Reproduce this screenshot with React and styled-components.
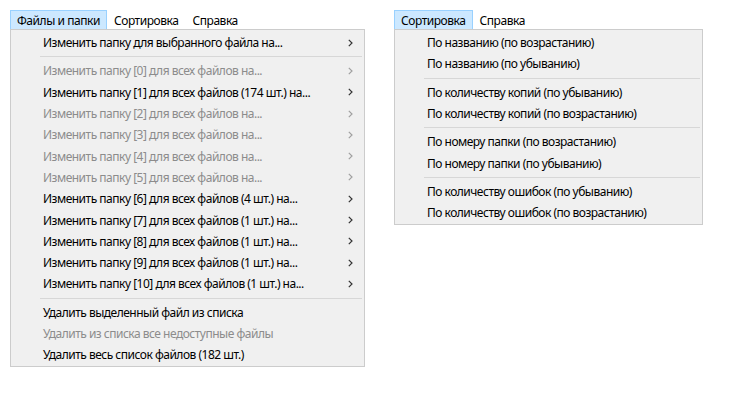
import React from "react";
import styled, { createGlobalStyle } from "styled-components";

const GlobalStyle = createGlobalStyle`
  html, body {
    margin: 0;
    padding: 0;
    background: #ffffff;
  }
  body {
    font-family: "Noto Sans", "Open Sans", "Liberation Sans", sans-serif;
    font-size: 12px;
    color: #000;
  }
`;

const Page = styled.div`
  display: flex;
  align-items: flex-start;
  gap: 29px;
  padding: 10px;
`;

const MenuGroup = styled.div`
  display: flex;
  flex-direction: column;
`;

const MenuBar = styled.div`
  display: flex;
  height: 19px;
`;

const MenuTitle = styled.div`
  box-sizing: border-box;
  height: 19px;
  padding: 0 6px;
  display: flex;
  align-items: center;
  border: 1px solid ${(p) => (p.$active ? "#99d1ff" : "transparent")};
  border-bottom: none;
  background: ${(p) => (p.$active ? "#cce8ff" : "transparent")};
  white-space: nowrap;
  letter-spacing: -0.45px;
`;

const Dropdown = styled.div`
  box-sizing: border-box;
  width: ${(p) => p.$width}px;
  background: #f0f0f0;
  border: 1px solid #cccccc;
  padding: 2px 2px 1px;
  display: flex;
  flex-direction: column;
`;

const Item = styled.div`
  height: 21.3px;
  display: flex;
  align-items: center;
  padding-left: 30px;
  padding-right: 9px;
  color: ${(p) => (p.$disabled ? "#8c8c8c" : "#000000")};
  white-space: nowrap;
  letter-spacing: -0.5px;
`;

const Label = styled.span`
  flex: 1;
`;

const Separator = styled.div`
  height: 1px;
  background: #d7d7d7;
  margin: 3px 0 3px 27px;
`;

const ChevronIcon = ({ disabled }) => (
  <svg width="5" height="8" viewBox="0 0 5 8" style={{ display: "block" }}>
    <polyline
      points="0.8,0.8 4,4 0.8,7.2"
      fill="none"
      stroke={disabled ? "#a0a0a0" : "#333333"}
      strokeWidth="1.2"
    />
  </svg>
);

const leftItems = [
  { label: "Изменить папку для выбранного файла на...", sub: true },
  { sep: true },
  { label: "Изменить папку [0] для всех файлов на...", sub: true, disabled: true },
  { label: "Изменить папку [1] для всех файлов (174 шт.) на...", sub: true },
  { label: "Изменить папку [2] для всех файлов на...", sub: true, disabled: true },
  { label: "Изменить папку [3] для всех файлов на...", sub: true, disabled: true },
  { label: "Изменить папку [4] для всех файлов на...", sub: true, disabled: true },
  { label: "Изменить папку [5] для всех файлов на...", sub: true, disabled: true },
  { label: "Изменить папку [6] для всех файлов (4 шт.) на...", sub: true },
  { label: "Изменить папку [7] для всех файлов (1 шт.) на...", sub: true },
  { label: "Изменить папку [8] для всех файлов (1 шт.) на...", sub: true },
  { label: "Изменить папку [9] для всех файлов (1 шт.) на...", sub: true },
  { label: "Изменить папку [10] для всех файлов (1 шт.) на...", sub: true },
  { sep: true },
  { label: "Удалить выделенный файл из списка" },
  { label: "Удалить из списка все недоступные файлы", disabled: true },
  { label: "Удалить весь список файлов (182 шт.)" },
];

const rightItems = [
  { label: "По названию (по возрастанию)" },
  { label: "По названию (по убыванию)" },
  { sep: true },
  { label: "По количеству копий (по убыванию)" },
  { label: "По количеству копий (по возрастанию)" },
  { sep: true },
  { label: "По номеру папки (по возрастанию)" },
  { label: "По номеру папки (по убыванию)" },
  { sep: true },
  { label: "По количеству ошибок (по убыванию)" },
  { label: "По количеству ошибок (по возрастанию)" },
];

const Menu = ({ titles, active, items, width }) => (
  <MenuGroup>
    <MenuBar>
      {titles.map((t) => (
        <MenuTitle key={t} $active={t === active}>
          {t}
        </MenuTitle>
      ))}
    </MenuBar>
    <Dropdown $width={width}>
      {items.map((it, i) =>
        it.sep ? (
          <Separator key={i} />
        ) : (
          <Item key={i} $disabled={it.disabled}>
            <Label>{it.label}</Label>
            {it.sub && <ChevronIcon disabled={it.disabled} />}
          </Item>
        )
      )}
    </Dropdown>
  </MenuGroup>
);

export default function App() {
  return (
    <>
      <GlobalStyle />
      <Page>
        <Menu
          titles={["Файлы и папки", "Сортировка", "Справка"]}
          active="Файлы и папки"
          items={leftItems}
          width={355}
        />
        <Menu
          titles={["Сортировка", "Справка"]}
          active="Сортировка"
          items={rightItems}
          width={309}
        />
      </Page>
    </>
  );
}
